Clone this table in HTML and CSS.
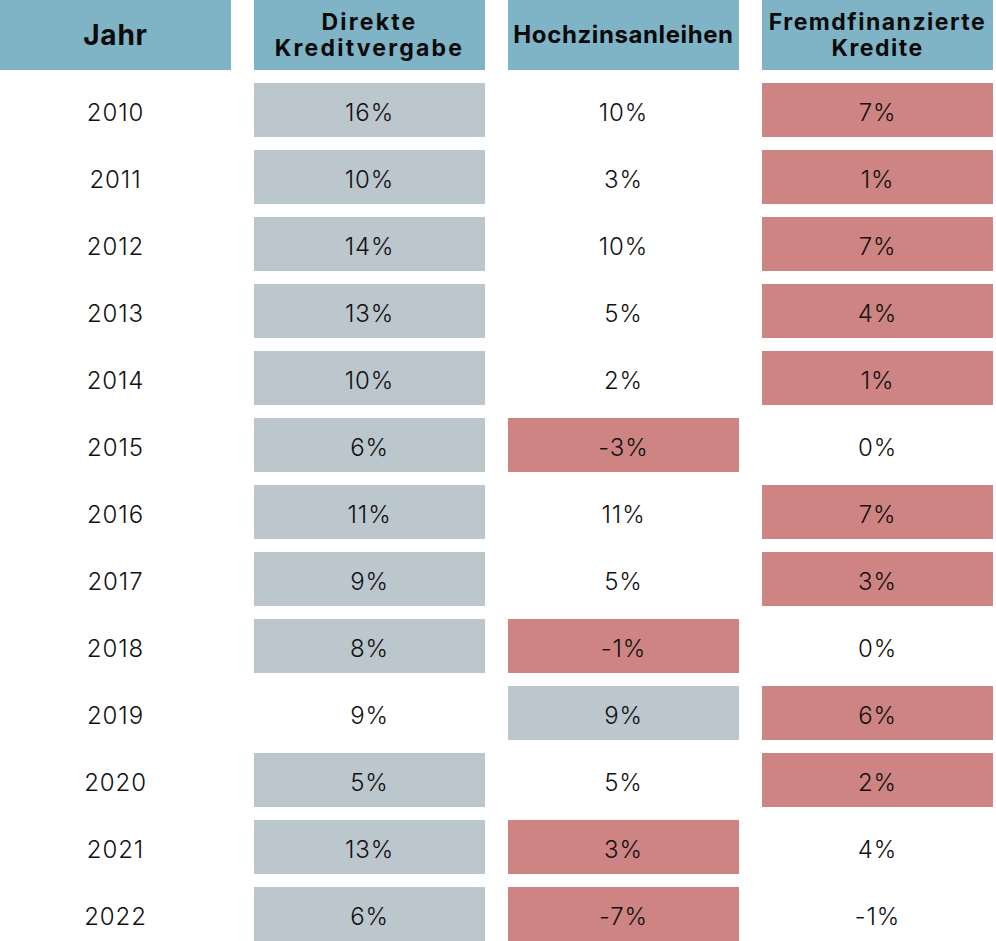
FILE: index.html
```html
<!DOCTYPE html>
<html lang="de">
<head>
<meta charset="utf-8">
<title>Renditen</title>
<link rel="stylesheet" href="styles.css">
</head>
<body>
<div class="table">
  <div class="cell head jahr">Jahr</div>
  <div class="cell head kredit">Direkte<br>Kreditvergabe</div>
  <div class="cell head hoch">Hochzinsanleihen</div>
  <div class="cell head fremd">Fremdfinanzierte<br>Kredite</div>

  <div class="cell">2010</div><div class="cell g">16%</div><div class="cell">10%</div><div class="cell r">7%</div>
  <div class="cell">2011</div><div class="cell g">10%</div><div class="cell">3%</div><div class="cell r">1%</div>
  <div class="cell">2012</div><div class="cell g">14%</div><div class="cell">10%</div><div class="cell r">7%</div>
  <div class="cell">2013</div><div class="cell g">13%</div><div class="cell">5%</div><div class="cell r">4%</div>
  <div class="cell">2014</div><div class="cell g">10%</div><div class="cell">2%</div><div class="cell r">1%</div>
  <div class="cell">2015</div><div class="cell g">6%</div><div class="cell r">-3%</div><div class="cell">0%</div>
  <div class="cell">2016</div><div class="cell g">11%</div><div class="cell">11%</div><div class="cell r">7%</div>
  <div class="cell">2017</div><div class="cell g">9%</div><div class="cell">5%</div><div class="cell r">3%</div>
  <div class="cell">2018</div><div class="cell g">8%</div><div class="cell r">-1%</div><div class="cell">0%</div>
  <div class="cell">2019</div><div class="cell">9%</div><div class="cell g">9%</div><div class="cell r">6%</div>
  <div class="cell">2020</div><div class="cell g">5%</div><div class="cell">5%</div><div class="cell r">2%</div>
  <div class="cell">2021</div><div class="cell g">13%</div><div class="cell r">3%</div><div class="cell">4%</div>
  <div class="cell">2022</div><div class="cell g">6%</div><div class="cell r">-7%</div><div class="cell">-1%</div>
</div>
</body>
</html>
```

FILE: styles.css
```css
html, body {
  margin: 0;
  padding: 0;
  background: #ffffff;
}
body {
  font-family: Inter, "Liberation Sans", sans-serif;
  color: #111111;
}
.table {
  display: grid;
  grid-template-columns: repeat(4, 231px);
  grid-template-rows: 70px repeat(13, 54px);
  column-gap: 23px;
  row-gap: 13px;
  width: 993px;
}
.cell {
  display: flex;
  align-items: center;
  justify-content: center;
  text-align: center;
  box-sizing: border-box;
  padding-top: 4px;
  font-size: 24px;
  font-weight: 350;
  letter-spacing: 0.9px;
}
.head {
  background: #7fb3c6;
  padding-top: 0;
  font-weight: 700;
  font-size: 24px;
  line-height: 26px;
  letter-spacing: 1.2px;
  color: #0a0a0a;
}
.head.jahr {
  font-size: 28px;
  letter-spacing: 0.8px;
}
.head.kredit {
  font-size: 23px;
  letter-spacing: 2.2px;
}
.head.fremd {
  font-size: 23px;
  letter-spacing: 1.5px;
}
.head.hoch {
  letter-spacing: 0.6px;
}
.g {
  background: #bbc6cd;
}
.r {
  background: #ce8482;
}
```
